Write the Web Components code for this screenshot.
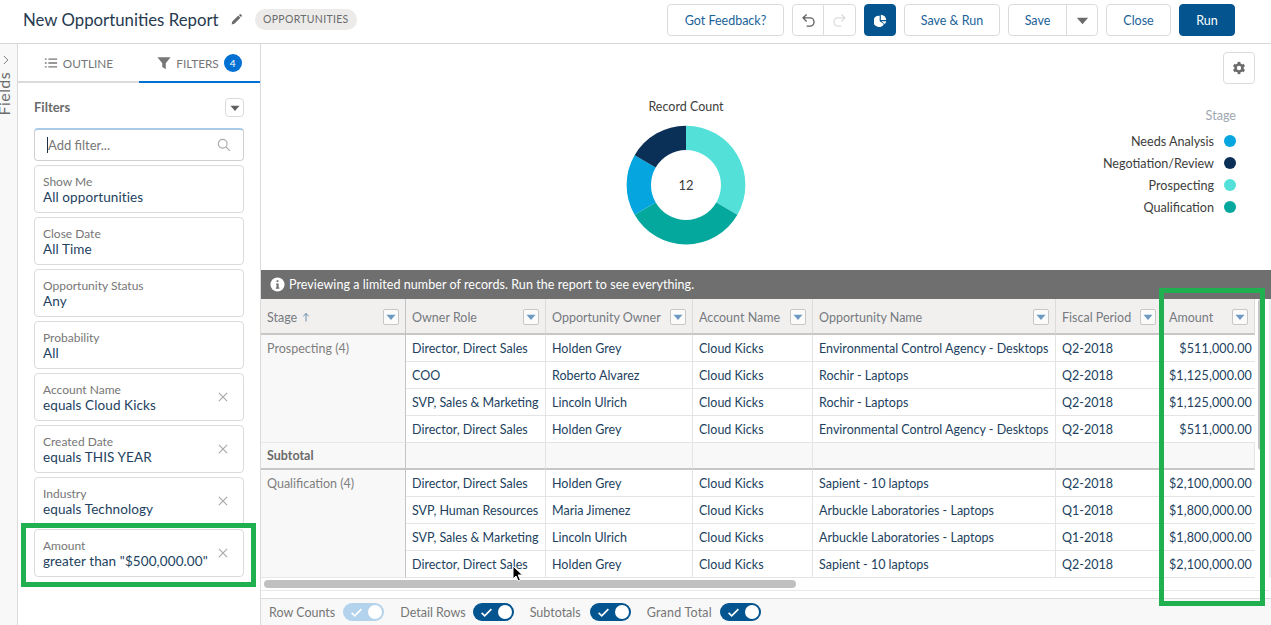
<!DOCTYPE html>
<html lang="en">
<head>
<meta charset="utf-8">
<title>New Opportunities Report</title>
<style>
  html, body { margin: 0; height: 100%; overflow: hidden; background: #fff; }
  body { font-family: Lato, "Open Sans", sans-serif; font-size: 13px; color: #16325c; position: relative; }
  report-app { height: 625px; }
</style>
</head>
<body>
<report-app></report-app>
<hl-box style="left:21px;top:523px;width:235px;height:64px"></hl-box>
<hl-box style="left:1159px;top:288px;width:106px;height:318px"></hl-box>
<mouse-pointer style="left:512px;top:565px"></mouse-pointer>

<script>
const ICONS = {
  pencil: '<path fill="currentColor" d="M2 14l.8-3.4 7.4-7.4 2.6 2.6-7.4 7.4zM11 2.4l1-1c.3-.3.8-.3 1.1 0l1.5 1.5c.3.3.3.8 0 1.1l-1 1z"/>',
  list: '<path fill="none" stroke="currentColor" stroke-width="1.5" d="M5 3.5h10M5 8h10M5 12.5h10M1 3.5h2M1 8h2M1 12.5h2"/>',
  filter: '<path fill="currentColor" d="M.5 1.5h15L10 8.2V15l-4-2.4V8.2z"/>',
  search: '<g fill="none" stroke="currentColor" stroke-width="1.3"><circle cx="6.5" cy="6.5" r="5"/><path d="M10.2 10.2l4.6 4.6"/></g>',
  close: '<path fill="none" stroke="currentColor" stroke-width="1.6" d="M2.5 2.5l11 11M13.5 2.5l-11 11"/>',
  caret: '<path fill="currentColor" d="M2 5h12L8 12z"/>',
  undo: '<path fill="none" stroke="currentColor" stroke-width="1.4" d="M6 1.5L2.2 5.2 6 9M2.6 5.2H9.5a4.4 4.4 0 0 1 0 8.8H6"/>',
  redo: '<path fill="none" stroke="currentColor" stroke-width="1.4" d="M10 1.5l3.8 3.7L10 9M13.4 5.2H6.5a4.4 4.4 0 0 0 0 8.8H10"/>',
  pie: '<path fill="currentColor" d="M7 2.2v6.6l5.3 3.4A6.9 6.9 0 1 1 7 2.2zM8.4 1A6.6 6.6 0 0 1 15 7.5H8.4z"/><path fill="currentColor" d="M9 9h6a7 7 0 0 1-1.6 3.4z"/>',
  gear: '<g fill="currentColor"><circle cx="8" cy="8" r="5.4"/><rect x="6.4" y="1" width="3.2" height="14"/><rect x="6.4" y="1" width="3.2" height="14" transform="rotate(60 8 8)"/><rect x="6.4" y="1" width="3.2" height="14" transform="rotate(120 8 8)"/></g><circle cx="8" cy="8" r="2.5" fill="#fff"/>',
  info: '<circle cx="8" cy="8" r="7.5" fill="#fff"/><path fill="#6f6f6f" d="M7 3.4h2v2H7zM6.4 6.8h2.8v4.4H10v1.2H6.2v-1.2H7V8H6.4z"/>',
  check: '<path fill="none" stroke="currentColor" stroke-width="2" d="M2 8.5l3.8 3.7L14 3.8"/>',
  up: '<path fill="none" stroke="currentColor" stroke-width="1.4" d="M8 15V2M3.6 7L8 2.4 12.4 7"/>',
  chevron: '<path fill="none" stroke="currentColor" stroke-width="1.4" d="M4.5 1.5L11 8l-6.5 6.5"/>'
};

class UiIcon extends HTMLElement {
  constructor() {
    super();
    this.attachShadow({mode: 'open'});
  }
  connectedCallback() {
    const size = this.getAttribute('size') || 16;
    this.shadowRoot.innerHTML = `
      <style>
        :host { display: inline-flex; flex: none; }
        svg { display: block; }
      </style>
      <svg width="${size}" height="${size}" viewBox="0 0 16 16">${ICONS[this.getAttribute('name')]}</svg>
    `;
  }
}
customElements.define('ui-icon', UiIcon);

class UiButton extends HTMLElement {
  constructor() {
    super();
    this.attachShadow({mode: 'open'}).innerHTML = `
      <style>
        :host {
          display: flex;
          align-items: center;
          justify-content: center;
          box-sizing: border-box;
          height: 32px;
          padding-top: 1px;
          border: 1px solid #dddbda;
          border-radius: 4px;
          background: #fff;
          color: #1a6299;
          font-size: 12.5px;
        }
        :host([brand]) { background: #04548f; border-color: #04548f; color: #fff; }
      </style>
      <slot></slot>
    `;
  }
}
customElements.define('ui-button', UiButton);

class AppHeader extends HTMLElement {
  constructor() {
    super();
    this.attachShadow({mode: 'open'}).innerHTML = `
      <style>
        :host {
          display: flex;
          align-items: center;
          box-sizing: border-box;
          height: 44px;
          padding: 0 36px 4px 23px;
          border-bottom: 1px solid #d8d8d8;
        }
        h1 { margin: 0; font-size: 16.8px; font-weight: 400; color: #263a50; }
        .pencil { margin-left: 11px; color: #6b6b6b; }
        .badge {
          margin-left: 12px;
          padding: 0 8.5px;
          height: 21px;
          line-height: 21px;
          border-radius: 11px;
          background: #ecebea;
          color: #6b6b6b;
          font-size: 10.5px;
          letter-spacing: .3px;
        }
        .actions { display: flex; gap: 8px; margin-left: auto; }
        .group { display: flex; }
        .undo { width: 32px; border-radius: 4px 0 0 4px; color: #5e5e5e; }
        .redo { width: 33px; margin-left: -1px; border-radius: 0 4px 4px 0; color: #dcdcdc; }
        .save { width: 59px; border-radius: 4px 0 0 4px; }
        .more { width: 32px; margin-left: -1px; border-radius: 0 4px 4px 0; color: #6b6b6b; }
      </style>
      <h1>New Opportunities Report</h1>
      <ui-icon class="pencil" name="pencil" size="13"></ui-icon>
      <span class="badge">OPPORTUNITIES</span>
      <div class="actions">
        <ui-button style="width:117px">Got Feedback?</ui-button>
        <div class="group">
          <ui-button class="undo"><ui-icon name="undo" size="15"></ui-icon></ui-button>
          <ui-button class="redo"><ui-icon name="redo" size="15"></ui-icon></ui-button>
        </div>
        <ui-button brand style="width:32px"><ui-icon name="pie" size="13"></ui-icon></ui-button>
        <ui-button style="width:96px">Save &amp; Run</ui-button>
        <div class="group">
          <ui-button class="save">Save</ui-button>
          <ui-button class="more"><ui-icon name="caret" size="15"></ui-icon></ui-button>
        </div>
        <ui-button style="width:65px">Close</ui-button>
        <ui-button brand style="width:56px">Run</ui-button>
      </div>
    `;
  }
}
customElements.define('app-header', AppHeader);

class FieldRail extends HTMLElement {
  constructor() {
    super();
    this.attachShadow({mode: 'open'}).innerHTML = `
      <style>
        :host {
          display: flex;
          flex-direction: column;
          box-sizing: border-box;
          width: 18px;
          padding-top: 11px;
          border-right: 1px solid #dddbda;
          background: #f8f8f8;
          color: #6b6b6b;
          overflow: hidden;
        }
        ui-icon { margin-left: 1px; }
        span {
          writing-mode: vertical-rl;
          transform: rotate(180deg);
          margin: 7px 0 0 -5px;
          font-size: 16px;
          line-height: 18px;
          letter-spacing: .4px;
        }
      </style>
      <ui-icon name="chevron" size="10"></ui-icon>
      <span>Fields</span>
    `;
  }
}
customElements.define('field-rail', FieldRail);

class FilterCard extends HTMLElement {
  constructor() {
    super();
    this.attachShadow({mode: 'open'});
  }
  connectedCallback() {
    const removable = this.hasAttribute('removable');
    this.shadowRoot.innerHTML = `
      <style>
        :host {
          display: flex;
          align-items: center;
          justify-content: space-between;
          box-sizing: border-box;
          height: 48px;
          padding: 0 14px 0 8px;
          border: 1px solid #dddbda;
          border-radius: 4px;
          background: #fff;
        }
        .label { padding-top: 1px; margin-bottom: -1px; font-size: 12px; line-height: 16px; color: #767676; }
        .value { font-size: 13.5px; letter-spacing: .1px; line-height: 16px; color: #223f60; white-space: nowrap; }
        ui-icon { color: #a9a9a9; }
      </style>
      <div>
        <div class="label">${this.getAttribute('label')}</div>
        <div class="value"><slot></slot></div>
      </div>
      ${removable ? '<ui-icon name="close" size="12"></ui-icon>' : ''}
    `;
  }
}
customElements.define('filter-card', FilterCard);

class FilterPanel extends HTMLElement {
  constructor() {
    super();
    this.attachShadow({mode: 'open'}).innerHTML = `
      <style>
        :host {
          display: flex;
          flex-direction: column;
          box-sizing: border-box;
          width: 243px;
          border-right: 1px solid #dddbda;
          background: #fff;
        }
        .tabs { display: flex; height: 39px; }
        .tab {
          flex: 1;
          display: flex;
          align-items: center;
          justify-content: center;
          gap: 5px;
          padding-top: 1px;
          border-bottom: 2px solid #dddbda;
          color: #767676;
          font-size: 11.8px;
        }
        .tab.active { border-bottom-color: #0070d2; }
        .count {
          width: 18px;
          height: 18px;
          line-height: 18px;
          border-radius: 50%;
          background: #0070d2;
          color: #fff;
          font-size: 10px;
          text-align: center;
        }
        .body { display: flex; flex-direction: column; gap: 4px; padding: 15px 16px 0; }
        .head {
          display: flex;
          align-items: center;
          justify-content: space-between;
          height: 19px;
          margin-bottom: 7px;
          font-weight: 700;
          font-size: 13px;
          color: #6b6b6b;
        }
        .head b { font-weight: 700; margin-top: -2px; }
        .menu {
          width: 19px;
          height: 19px;
          box-sizing: border-box;
          display: flex;
          align-items: center;
          justify-content: center;
          border: 1px solid #dddbda;
          border-radius: 4px;
          color: #5f5f5f;
        }
        .add {
          display: flex;
          align-items: center;
          justify-content: space-between;
          box-sizing: border-box;
          height: 33px;
          padding: 0 12px;
          border: 1px solid #d0d0d0;
          border-top: 2px solid #a9cbe8;
          border-radius: 4px;
          color: #767676;
          font-size: 13px;
        }
        .add span { border-left: 1px solid #1d2f45; }
        .add ui-icon { color: #a9a9a9; }
      </style>
      <div class="tabs">
        <div class="tab"><ui-icon name="list" size="14"></ui-icon>OUTLINE</div>
        <div class="tab active"><ui-icon name="filter" size="14"></ui-icon>FILTERS<span class="count">4</span></div>
      </div>
      <div class="body">
        <div class="head"><b>Filters</b><span class="menu"><ui-icon name="caret" size="12"></ui-icon></span></div>
        <div class="add"><span>Add filter...</span><ui-icon name="search" size="14"></ui-icon></div>
        <slot></slot>
      </div>
    `;
  }
}
customElements.define('filter-panel', FilterPanel);

class ChartPanel extends HTMLElement {
  constructor() {
    super();
    this.attachShadow({mode: 'open'}).innerHTML = `
      <style>
        :host { display: flex; height: 226px; background: #fff; }
        .plot { flex: 1; display: flex; flex-direction: column; align-items: center; padding-top: 55px; }
        .title { font-size: 12.5px; line-height: 16px; color: #3e3e3c; margin-bottom: 10px; }
        svg { display: block; }
        .side { width: 160px; display: flex; flex-direction: column; align-items: flex-end; padding: 8px 16px 0 0; box-sizing: border-box; }
        .gear {
          box-sizing: border-box;
          width: 32px;
          height: 32px;
          display: flex;
          align-items: center;
          justify-content: center;
          border: 1px solid #dddbda;
          border-radius: 4px;
          color: #6b6b6b;
        }
        .legend { display: flex; flex-direction: column; align-items: flex-end; padding: 23px 19px 0 0; font-size: 12.6px; color: #3e3e3c; }
        .legend .head { height: 19px; line-height: 18px; color: #a0a7b0; margin-bottom: 4px; }
        .item { display: flex; align-items: center; gap: 10px; height: 22px; white-space: nowrap; }
        .dot { width: 12px; height: 12px; border-radius: 50%; }
      </style>
      <div class="plot">
        <div class="title">Record Count</div>
        <svg width="120" height="120" viewBox="-60 -60 120 120">
          <path fill="#52e0d9" d="M0-59.3A59.3 59.3 0 0 1 51.4 29.7L30.3 17.5A35 35 0 0 0 0-35z"/>
          <path fill="#04a89c" d="M51.4 29.7A59.3 59.3 0 0 1-51.4 29.7L-30.3 17.5A35 35 0 0 0 30.3 17.5z"/>
          <path fill="#05a5df" d="M-51.4 29.7A59.3 59.3 0 0 1-51.4-29.7L-30.3-17.5A35 35 0 0 0-30.3 17.5z"/>
          <path fill="#0b3058" d="M-51.4-29.7A59.3 59.3 0 0 1 0-59.3V-35A35 35 0 0 0-30.3-17.5z"/>
          <text x="0" y="5" text-anchor="middle" font-size="13" fill="#3e3e3c" font-family="Lato, sans-serif">12</text>
        </svg>
      </div>
      <div class="side">
        <div class="gear"><ui-icon name="gear" size="14"></ui-icon></div>
        <div class="legend">
          <div class="head">Stage</div>
          <div class="item">Needs Analysis<span class="dot" style="background:#05a5df"></span></div>
          <div class="item">Negotiation/Review<span class="dot" style="background:#0b3058"></span></div>
          <div class="item">Prospecting<span class="dot" style="background:#52e0d9"></span></div>
          <div class="item">Qualification<span class="dot" style="background:#04a89c"></span></div>
        </div>
      </div>
    `;
  }
}
customElements.define('chart-panel', ChartPanel);

class PreviewBanner extends HTMLElement {
  constructor() {
    super();
    this.attachShadow({mode: 'open'}).innerHTML = `
      <style>
        :host {
          display: flex;
          align-items: center;
          gap: 4px;
          box-sizing: border-box;
          height: 29px;
          padding-left: 9px;
          background: #6f6f6f;
          color: #fff;
          font-size: 12.5px;
          letter-spacing: .06px;
        }
      </style>
      <ui-icon name="info" size="15"></ui-icon>
      <slot></slot>
    `;
  }
}
customElements.define('preview-banner', PreviewBanner);

const COLUMNS = ['Stage', 'Owner Role', 'Opportunity Owner', 'Account Name', 'Opportunity Name', 'Fiscal Period', 'Amount'];
const GROUPS = [
  ['Prospecting (4)', [
    ['Director, Direct Sales', 'Holden Grey', 'Cloud Kicks', 'Environmental Control Agency - Desktops', 'Q2-2018', '$511,000.00'],
    ['COO', 'Roberto Alvarez', 'Cloud Kicks', 'Rochir - Laptops', 'Q2-2018', '$1,125,000.00'],
    ['SVP, Sales & Marketing', 'Lincoln Ulrich', 'Cloud Kicks', 'Rochir - Laptops', 'Q2-2018', '$1,125,000.00'],
    ['Director, Direct Sales', 'Holden Grey', 'Cloud Kicks', 'Environmental Control Agency - Desktops', 'Q2-2018', '$511,000.00']
  ]],
  ['Qualification (4)', [
    ['Director, Direct Sales', 'Holden Grey', 'Cloud Kicks', 'Sapient - 10 laptops', 'Q2-2018', '$2,100,000.00'],
    ['SVP, Human Resources', 'Maria Jimenez', 'Cloud Kicks', 'Arbuckle Laboratories - Laptops', 'Q1-2018', '$1,800,000.00'],
    ['SVP, Sales & Marketing', 'Lincoln Ulrich', 'Cloud Kicks', 'Arbuckle Laboratories - Laptops', 'Q1-2018', '$1,800,000.00'],
    ['Director, Direct Sales', 'Holden Grey', 'Cloud Kicks', 'Sapient - 10 laptops', 'Q2-2018', '$2,100,000.00']
  ]]
];

class ReportTable extends HTMLElement {
  constructor() {
    super();
    this.attachShadow({mode: 'open'});
  }
  connectedCallback() {
    const esc = s => s.replace(/&/g, '&amp;');
    const head = COLUMNS.map((c, i) => `
      <div class="th">
        <span>${c}</span>${i === 0 ? '<ui-icon class="up" name="up" size="10"></ui-icon>' : ''}
        <span class="drop"><ui-icon name="caret" size="12"></ui-icon></span>
      </div>`).join('');
    const body = GROUPS.map(([stage, rows], g) => {
      const cells = rows.map(r => r.map((v, i) =>
        `<div class="td${i === 5 ? ' num' : ''}">${esc(v)}</div>`).join('')).join('');
      const sub = g === 0 ? `<div class="sub label">Subtotal</div>${'<div class="sub"></div>'.repeat(6)}` : '';
      return `<div class="stage" style="grid-row: span 4">${stage}</div>${cells}${sub}`;
    }).join('');
    this.shadowRoot.innerHTML = `
      <style>
        :host { display: block; height: 279px; overflow: hidden; background: #fff; }
        .grid {
          display: grid;
          grid-template-columns: 145px 140px 147px 120px 243px 107px 92px;
          grid-template-rows: 36px repeat(9, 27px);
          width: 994px;
          font-size: 12.5px;
        }
        .th {
          display: flex;
          align-items: center;
          box-sizing: border-box;
          padding: 2px 6px 0;
          background: #f1f0ef;
          border-right: 1px solid #dddbda;
          border-bottom: 2px solid #c9c7c5;
          color: #767a80;
          white-space: nowrap;
        }
        .th:first-child { border-right: 1px solid #c0c3c8; }
        .th:last-child { padding-right: 3px; border-right: 0; }
        .up { margin-left: 4px; color: #5b7fa3; }
        .drop {
          box-sizing: border-box;
          width: 16px;
          height: 16px;
          margin-left: auto;
          display: flex;
          align-items: center;
          justify-content: center;
          border: 1px solid #c9c7c5;
          border-radius: 2px;
          background: #fbfbfb;
          color: #6c9ac0;
        }
        .stage, .sub {
          box-sizing: border-box;
          background: #f8f8f8;
          color: #7f7f7f;
          padding: 6px 6px 0;
          border-right: 1px solid #c0c3c8;
        }
        .stage { border-bottom: 1px solid #e8e8e8; }
        .sub { padding-top: 5px; border-right: 1px solid #e4e4e4; border-bottom: 2px solid #c9c7c5; height: 27px; }
        .sub.label { border-right: 1px solid #c0c3c8; font-weight: 700; color: #6b6b6b; }
        .sub:last-child { border-right: 0; }
        .td {
          box-sizing: border-box;
          padding: 6px 0 0 6px;
          border-right: 1px solid #e4e4e4;
          border-bottom: 1px solid #e4e4e4;
          color: #223f60;
          white-space: nowrap;
          overflow: hidden;
        }
        .td.num { padding: 6px 3px 0 0; text-align: right; border-right: 0; letter-spacing: .15px; }
      </style>
      <div class="grid">${head}${body}</div>
    `;
  }
}
customElements.define('report-table', ReportTable);

class ToggleSwitch extends HTMLElement {
  constructor() {
    super();
    this.attachShadow({mode: 'open'}).innerHTML = `
      <style>
        :host {
          display: flex;
          align-items: center;
          justify-content: space-between;
          box-sizing: border-box;
          width: 41px;
          height: 18px;
          padding: 0 2px 0 7px;
          border-radius: 9px;
          background: #04548f;
          color: #fff;
        }
        :host([off]) { background: #b3d2ec; }
        i { width: 14px; height: 14px; border-radius: 50%; background: #fff; }
      </style>
      <ui-icon name="check" size="13"></ui-icon><i></i>
    `;
  }
}
customElements.define('toggle-switch', ToggleSwitch);

class ReportFooter extends HTMLElement {
  constructor() {
    super();
    this.attachShadow({mode: 'open'}).innerHTML = `
      <style>
        :host {
          display: flex;
          align-items: center;
          box-sizing: border-box;
          height: 27px;
          padding-left: 8px;
          border-top: 1px solid #dddbda;
          background: #f8f8f8;
          color: #767676;
          font-size: 12.5px;
        }
        .pair { display: flex; align-items: center; gap: 8px; margin-right: 16px; }
      </style>
      <div class="pair">Row Counts<toggle-switch off></toggle-switch></div>
      <div class="pair" style="gap:7px">Detail Rows<toggle-switch></toggle-switch></div>
      <div class="pair" style="gap:9px">Subtotals<toggle-switch></toggle-switch></div>
      <div class="pair" style="letter-spacing:.2px">Grand Total<toggle-switch></toggle-switch></div>
    `;
  }
}
customElements.define('report-footer', ReportFooter);

class ReportScrollers extends HTMLElement {
  constructor() {
    super();
    this.attachShadow({mode: 'open'}).innerHTML = `
      <style>
        :host { display: block; box-sizing: border-box; height: 20px; padding-top: 2px; }
        .bar { height: 8px; margin: 0 475px 0 3px; border-radius: 4px; background: #c0c0c0; }
        .rule { height: 1px; margin: 2px 2px 0 0; background: #e8e8e8; }
      </style>
      <div class="bar"></div>
      <div class="rule"></div>
    `;
  }
}
customElements.define('report-scrollers', ReportScrollers);

class ReportApp extends HTMLElement {
  constructor() {
    super();
    this.attachShadow({mode: 'open'}).innerHTML = `
      <style>
        :host { display: flex; flex-direction: column; }
        .body { flex: 1; display: flex; min-height: 0; }
        main { flex: 1; min-width: 0; display: flex; flex-direction: column; }
        .data { display: flex; }
        report-table { flex: 1; min-width: 0; }
        .vbar { width: 16px; height: 279px; box-sizing: border-box; padding-left: 3px; border-right: 2px solid #eeeeee; }
        .vbar div { width: 7px; height: 151px; border-radius: 3px; background: #c4c4c4; }
      </style>
      <app-header></app-header>
      <div class="body">
        <field-rail></field-rail>
        <filter-panel>
          <filter-card label="Show Me">All opportunities</filter-card>
          <filter-card label="Close Date">All Time</filter-card>
          <filter-card label="Opportunity Status">Any</filter-card>
          <filter-card label="Probability">All</filter-card>
          <filter-card label="Account Name" removable>equals Cloud Kicks</filter-card>
          <filter-card label="Created Date" removable>equals THIS YEAR</filter-card>
          <filter-card label="Industry" removable>equals Technology</filter-card>
          <filter-card label="Amount" removable>greater than "$500,000.00"</filter-card>
        </filter-panel>
        <main>
          <chart-panel></chart-panel>
          <preview-banner>Previewing a limited number of records. Run the report to see everything.</preview-banner>
          <div class="data">
            <report-table></report-table>
            <div class="vbar"><div></div></div>
          </div>
          <report-scrollers></report-scrollers>
          <report-footer></report-footer>
        </main>
      </div>
    `;
  }
}
customElements.define('report-app', ReportApp);

class HlBox extends HTMLElement {
  constructor() {
    super();
    this.attachShadow({mode: 'open'}).innerHTML = `
      <style>
        :host {
          position: absolute;
          box-sizing: border-box;
          border: 5px solid #21b04f;
          pointer-events: none;
        }
      </style>
    `;
  }
}
customElements.define('hl-box', HlBox);

class MousePointer extends HTMLElement {
  constructor() {
    super();
    this.attachShadow({mode: 'open'}).innerHTML = `
      <style>
        :host { position: absolute; display: block; width: 12px; height: 18px; }
      </style>
      <svg width="12" height="18" viewBox="0 0 12 18">
        <path d="M1 1v13l3-3 2.2 5 2.2-1-2.2-5h4.3z" fill="#000" stroke="#fff" stroke-width="1"/>
      </svg>
    `;
  }
}
customElements.define('mouse-pointer', MousePointer);
</script>
</body>
</html>
